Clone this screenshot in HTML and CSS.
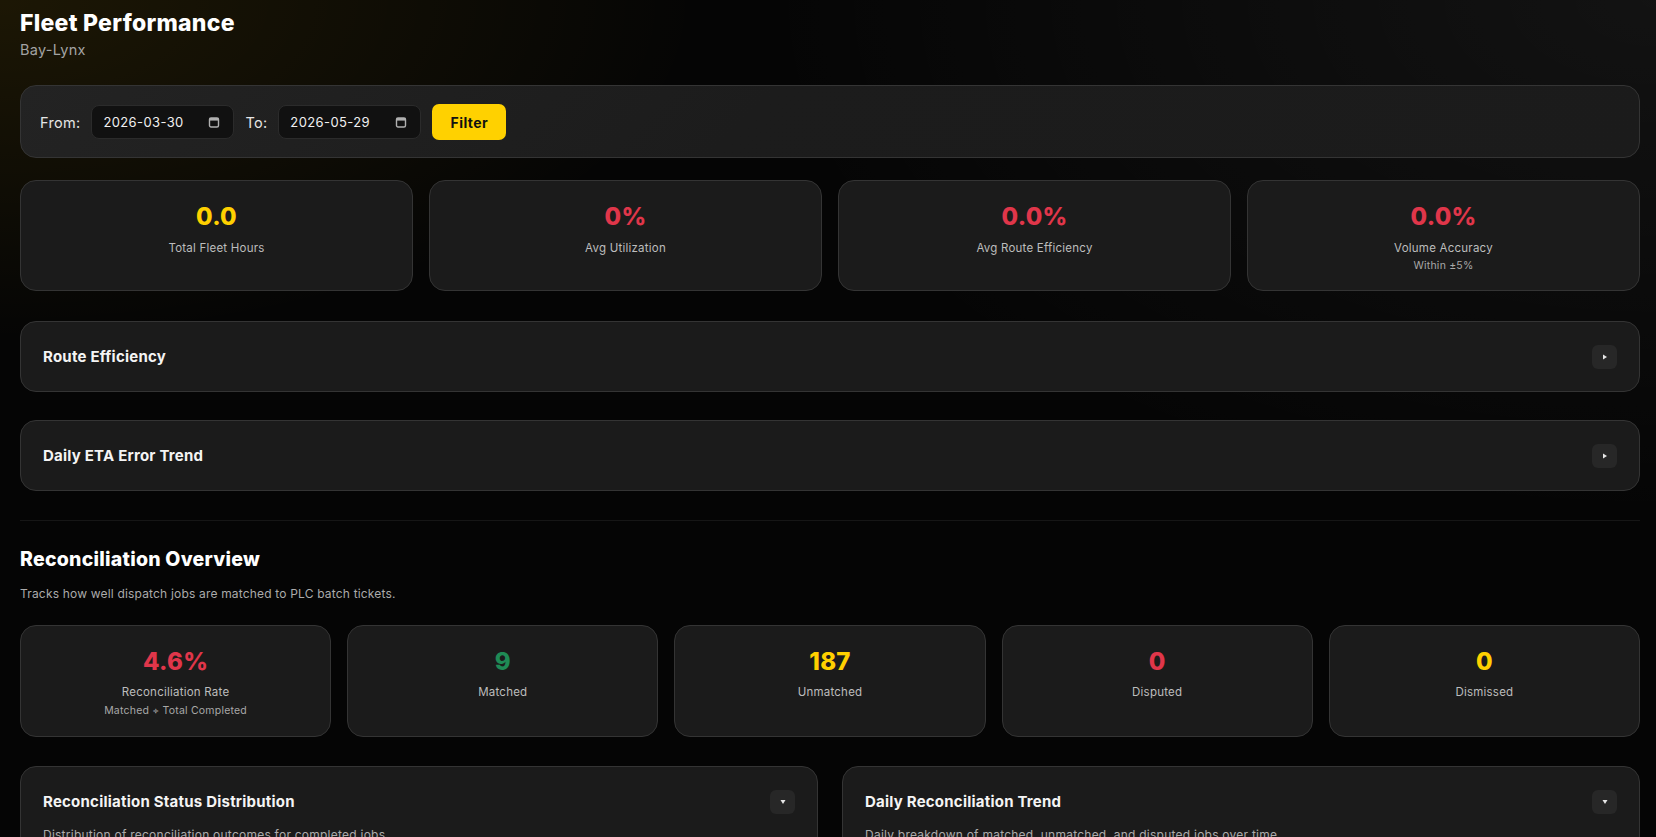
FILE: index.html
```html
<!DOCTYPE html>
<html lang="en">
<head>
<meta charset="utf-8">
<title>Fleet Performance</title>
<link rel="stylesheet" href="styles.css">
</head>
<body>
<div class="page">
  <header class="page-head">
    <h1 class="page-title">Fleet Performance</h1>
    <div class="page-sub">Bay-Lynx</div>
  </header>

  <section class="card filter-bar">
    <span class="filter-label">From:</span>
    <div class="date-input">
      <span>2026-03-30</span>
      <svg class="cal" viewBox="0 0 12 12" width="12" height="12"><rect x="1.5" y="2" width="9" height="9" rx="1.5" fill="none" stroke="#b0b0b0" stroke-width="1.4"/><rect x="1.5" y="2" width="9" height="2.6" fill="#b0b0b0"/></svg>
    </div>
    <span class="filter-label">To:</span>
    <div class="date-input">
      <span>2026-05-29</span>
      <svg class="cal" viewBox="0 0 12 12" width="12" height="12"><rect x="1.5" y="2" width="9" height="9" rx="1.5" fill="none" stroke="#b0b0b0" stroke-width="1.4"/><rect x="1.5" y="2" width="9" height="2.6" fill="#b0b0b0"/></svg>
    </div>
    <button class="btn-filter">Filter</button>
  </section>

  <section class="kpi-grid">
    <div class="card stat">
      <div class="stat-value yellow">0.0</div>
      <div class="stat-label">Total Fleet Hours</div>
    </div>
    <div class="card stat">
      <div class="stat-value red">0%</div>
      <div class="stat-label">Avg Utilization</div>
    </div>
    <div class="card stat">
      <div class="stat-value red">0.0%</div>
      <div class="stat-label">Avg Route Efficiency</div>
    </div>
    <div class="card stat">
      <div class="stat-value red">0.0%</div>
      <div class="stat-label">Volume Accuracy</div>
      <div class="stat-sub">Within ±5%</div>
    </div>
  </section>

  <section class="card panel collapsed first-panel">
    <div class="panel-head">
      <h3 class="panel-title">Route Efficiency</h3>
      <span class="toggle"><svg viewBox="0 0 6 6" width="6" height="6"><path d="M1 0.5 L5 3 L1 5.5 Z" fill="#e6e6e6"/></svg></span>
    </div>
  </section>

  <section class="card panel collapsed second-panel">
    <div class="panel-head">
      <h3 class="panel-title">Daily ETA Error Trend</h3>
      <span class="toggle"><svg viewBox="0 0 6 6" width="6" height="6"><path d="M1 0.5 L5 3 L1 5.5 Z" fill="#e6e6e6"/></svg></span>
    </div>
  </section>

  <hr class="divider">

  <h2 class="section-title">Reconciliation Overview</h2>
  <p class="section-desc">Tracks how well dispatch jobs are matched to PLC batch tickets.</p>

  <section class="recon-grid">
    <div class="card stat recon">
      <div class="stat-value red">4.6%</div>
      <div class="stat-label">Reconciliation Rate</div>
      <div class="stat-sub">Matched ÷ Total Completed</div>
    </div>
    <div class="card stat recon">
      <div class="stat-value green">9</div>
      <div class="stat-label">Matched</div>
    </div>
    <div class="card stat recon">
      <div class="stat-value yellow">187</div>
      <div class="stat-label">Unmatched</div>
    </div>
    <div class="card stat recon">
      <div class="stat-value red">0</div>
      <div class="stat-label">Disputed</div>
    </div>
    <div class="card stat recon">
      <div class="stat-value yellow">0</div>
      <div class="stat-label">Dismissed</div>
    </div>
  </section>

  <section class="chart-grid">
    <div class="card panel chart">
      <div class="panel-head">
        <h3 class="panel-title">Reconciliation Status Distribution</h3>
        <span class="toggle"><svg viewBox="0 0 6 6" width="6" height="6"><path d="M0.5 1 L5.5 1 L3 5 Z" fill="#e6e6e6"/></svg></span>
      </div>
      <p class="panel-desc">Distribution of reconciliation outcomes for completed jobs.</p>
      <div class="chart-area"></div>
    </div>
    <div class="card panel chart">
      <div class="panel-head">
        <h3 class="panel-title">Daily Reconciliation Trend</h3>
        <span class="toggle"><svg viewBox="0 0 6 6" width="6" height="6"><path d="M0.5 1 L5.5 1 L3 5 Z" fill="#e6e6e6"/></svg></span>
      </div>
      <p class="panel-desc">Daily breakdown of matched, unmatched, and disputed jobs over time.</p>
      <div class="chart-area"></div>
    </div>
  </section>
</div>
</body>
</html>
```

FILE: styles.css
```css
* { box-sizing: border-box; }

html, body {
  margin: 0;
  padding: 0;
}

body {
  min-height: 100vh;
  font-family: "Inter", "Open Sans", "DejaVu Sans", sans-serif;
  color: #e8e8e8;
  background:
    radial-gradient(ellipse 700px 340px at 0 0, rgba(255, 196, 0, 0.095), rgba(255, 196, 0, 0) 100%),
    radial-gradient(ellipse 900px 520px at 100% 0, rgba(255, 255, 255, 0.055), rgba(255, 255, 255, 0) 100%),
    #050505;
  background-repeat: no-repeat;
  background-color: #050505;
}

.page {
  padding: 10px 16px 40px 20px;
}

.page-title {
  margin: 0;
  font-size: 23px;
  line-height: 26px;
  font-weight: 800;
  color: #ffffff;
  letter-spacing: 0.012em;
}

.page-sub {
  margin-top: 4px;
  font-size: 14.5px;
  line-height: 20px;
  color: #a3a3a3;
  letter-spacing: 0.02em;
}

.card {
  background: #1b1b1b;
  border: 1px solid #343434;
  border-radius: 16px;
}

/* filter bar */
.filter-bar {
  margin-top: 25px;
  display: flex;
  align-items: center;
  gap: 11px;
  padding: 18px 18px 17px 19px;
  background: linear-gradient(135deg, #232323 0%, #1c1c1c 45%, #1b1b1b 100%);
}

.filter-label {
  font-size: 14.5px;
  color: #e6e6e6;
  letter-spacing: 0.02em;
}

.date-input {
  width: 143px;
  height: 34px;
  display: flex;
  align-items: center;
  justify-content: space-between;
  padding: 0 13px 0 11px;
  background: #111111;
  border: 1px solid #2b2b2b;
  border-radius: 8px;
  font-size: 13px;
  color: #f0f0f0;
  letter-spacing: 0.03em;
}

.cal { display: block; }

.btn-filter {
  height: 36px;
  width: 74px;
  border: none;
  border-radius: 7px;
  background: #ffd100;
  color: #111111;
  font-family: inherit;
  font-size: 14px;
  font-weight: 700;
  letter-spacing: 0.03em;
  padding: 0;
}

/* stat cards */
.kpi-grid {
  margin-top: 22px;
  display: grid;
  grid-template-columns: repeat(4, 1fr);
  gap: 16px;
}

.stat {
  padding: 20px 16px 16px;
  text-align: center;
}

.stat-value {
  font-size: 24px;
  line-height: 32px;
  font-weight: 800;
  letter-spacing: 0.01em;
}

.stat-label {
  margin-top: 6px;
  font-size: 11.5px;
  line-height: 18px;
  color: #bdbdbd;
  letter-spacing: 0.02em;
}

.stat-sub {
  margin-top: 1px;
  font-size: 10.5px;
  line-height: 16px;
  color: #a8a8a8;
  letter-spacing: 0.02em;
}

.yellow { color: #ffd000; }
.red { color: #e0364a; }
.green { color: #1f8a55; }

/* collapsible panels */
.panel {
  padding: 22px;
}

.first-panel { margin-top: 30px; }
.second-panel { margin-top: 28px; }

.panel-head {
  display: flex;
  align-items: center;
  justify-content: space-between;
  height: 25px;
}

.panel-title {
  margin: 0;
  font-size: 15px;
  line-height: 20px;
  font-weight: 700;
  color: #f4f4f4;
  letter-spacing: 0.015em;
}

.toggle {
  width: 25px;
  height: 24px;
  border-radius: 6px;
  background: #272727;
  display: flex;
  align-items: center;
  justify-content: center;
}

.toggle svg { display: block; }

.divider {
  margin: 29px 0 0;
  border: none;
  height: 1px;
  background: #161616;
}

.section-title {
  margin: 26px 0 0;
  font-size: 19.5px;
  line-height: 24px;
  font-weight: 800;
  color: #ffffff;
  letter-spacing: 0.012em;
}

.section-desc {
  margin: 14px 0 0;
  font-size: 12px;
  line-height: 18px;
  color: #ababab;
  letter-spacing: 0.015em;
}

.recon-grid {
  margin-top: 22px;
  display: grid;
  grid-template-columns: repeat(5, 1fr);
  gap: 16px;
}

.recon {
  padding: 20px 16px 18px;
}

.recon .stat-label {
  line-height: 17px;
}

.recon .stat-sub {
  margin-top: 2px;
  line-height: 15px;
}

.chart-grid {
  margin-top: 29px;
  display: grid;
  grid-template-columns: 1fr 1fr;
  gap: 24px;
}

.panel-desc {
  margin: 12px 0 0;
  font-size: 12px;
  line-height: 18px;
  color: #ababab;
  letter-spacing: 0.02em;
}

.chart-area {
  height: 280px;
}
```
